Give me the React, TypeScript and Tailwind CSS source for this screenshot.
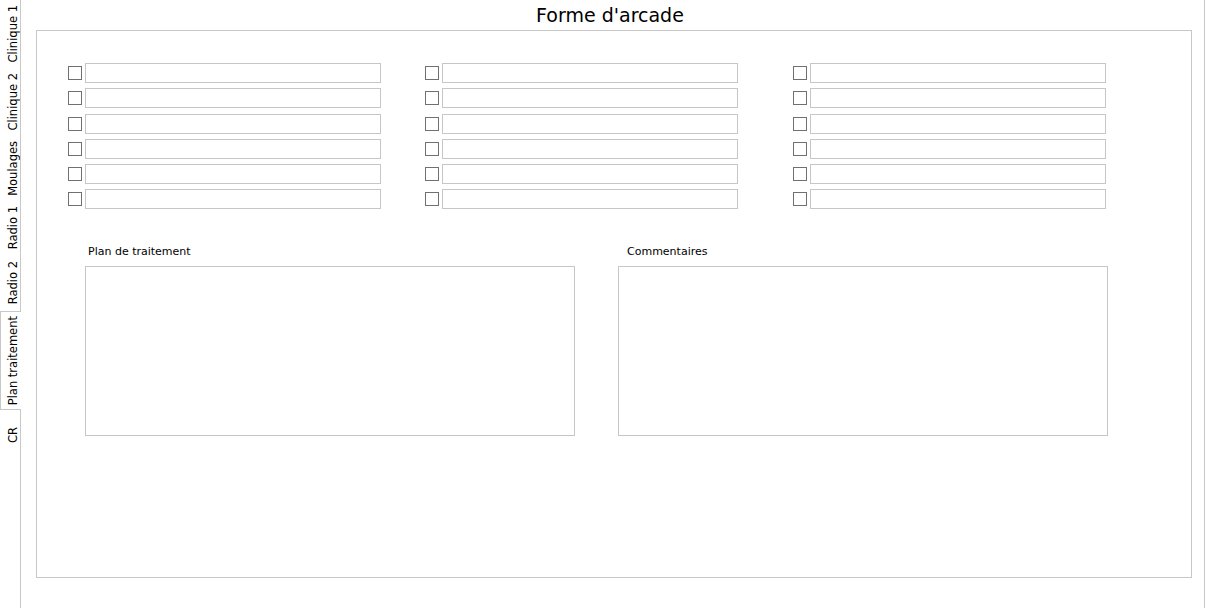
import React from "react";

const rowTops = [0, 5, 6, 5, 5, 5];

function Column({ className }: { className: string }) {
  return (
    <div className={"flex flex-col w-[313px] " + className}>
      {rowTops.map((mt, i) => (
        <div key={i} className="flex items-center h-[20px]" style={{ marginTop: mt }}>
          <input
            type="checkbox"
            className="appearance-none w-[14px] h-[14px] border border-[#707070] bg-white m-0 shrink-0"
          />
          <input
            type="text"
            className="ml-[3px] w-[296px] h-[20px] border border-[#c6c6c6] bg-white outline-none"
          />
        </div>
      ))}
    </div>
  );
}

function Tab({ label, h }: { label: string; h: string }) {
  return (
    <div className={"flex items-center w-[21px] pl-[7px] border-r border-[#c8c8c8] " + h}>
      <span className="[writing-mode:vertical-rl] rotate-180 leading-[13px] text-[11.5px] whitespace-nowrap">
        {label}
      </span>
    </div>
  );
}

export default function App() {
  return (
    <div className="flex w-[1205px] h-[608px] bg-white text-black font-['DejaVu_Sans',sans-serif] overflow-hidden">
      <div className="flex flex-col w-[21px] shrink-0">
        <Tab label="Clinique 1" h="h-[67px]" />
        <Tab label="Clinique 2" h="h-[69px]" />
        <Tab label="Moulages" h="h-[64px]" />
        <Tab label="Radio 1" h="h-[55px]" />
        <Tab label="Radio 2" h="h-[56px]" />
        <div className="flex items-center w-[21px] h-[99px] pl-[6px] border-l border-t border-b border-[#c8c8c8]">
          <span className="[writing-mode:vertical-rl] rotate-180 leading-[13px] text-[11.5px] whitespace-nowrap">
            Plan traitement
          </span>
        </div>
        <Tab label="CR" h="h-[50px]" />
        <div className="flex-1 w-[21px] border-r border-[#c8c8c8]" />
      </div>
      <div className="flex flex-col w-[1184px] border-r border-[#c8c8c8]">
        <div className="h-[30px] pt-[4px] pr-[5px] text-center text-[19px] leading-[22px]">
          Forme d'arcade
        </div>
        <div className="ml-[15px] w-[1156px] h-[548px] border border-[#c8c8c8] pt-[32px]">
          <div className="flex pl-[31px]">
            <Column className="" />
            <Column className="ml-[44px]" />
            <Column className="ml-[55px]" />
          </div>
          <div className="flex mt-[36px] pl-[48px] text-[11px] leading-[13px]">
            <div className="flex flex-col w-[490px]">
              <div className="h-[21px] pl-[3px]">Plan de traitement</div>
              <textarea className="w-[490px] h-[170px] border border-[#c6c6c6] resize-none outline-none" />
            </div>
            <div className="flex flex-col w-[490px] ml-[43px]">
              <div className="h-[21px] pl-[9px]">Commentaires</div>
              <textarea className="w-[490px] h-[170px] border border-[#c6c6c6] resize-none outline-none" />
            </div>
          </div>
        </div>
      </div>
    </div>
  );
}
